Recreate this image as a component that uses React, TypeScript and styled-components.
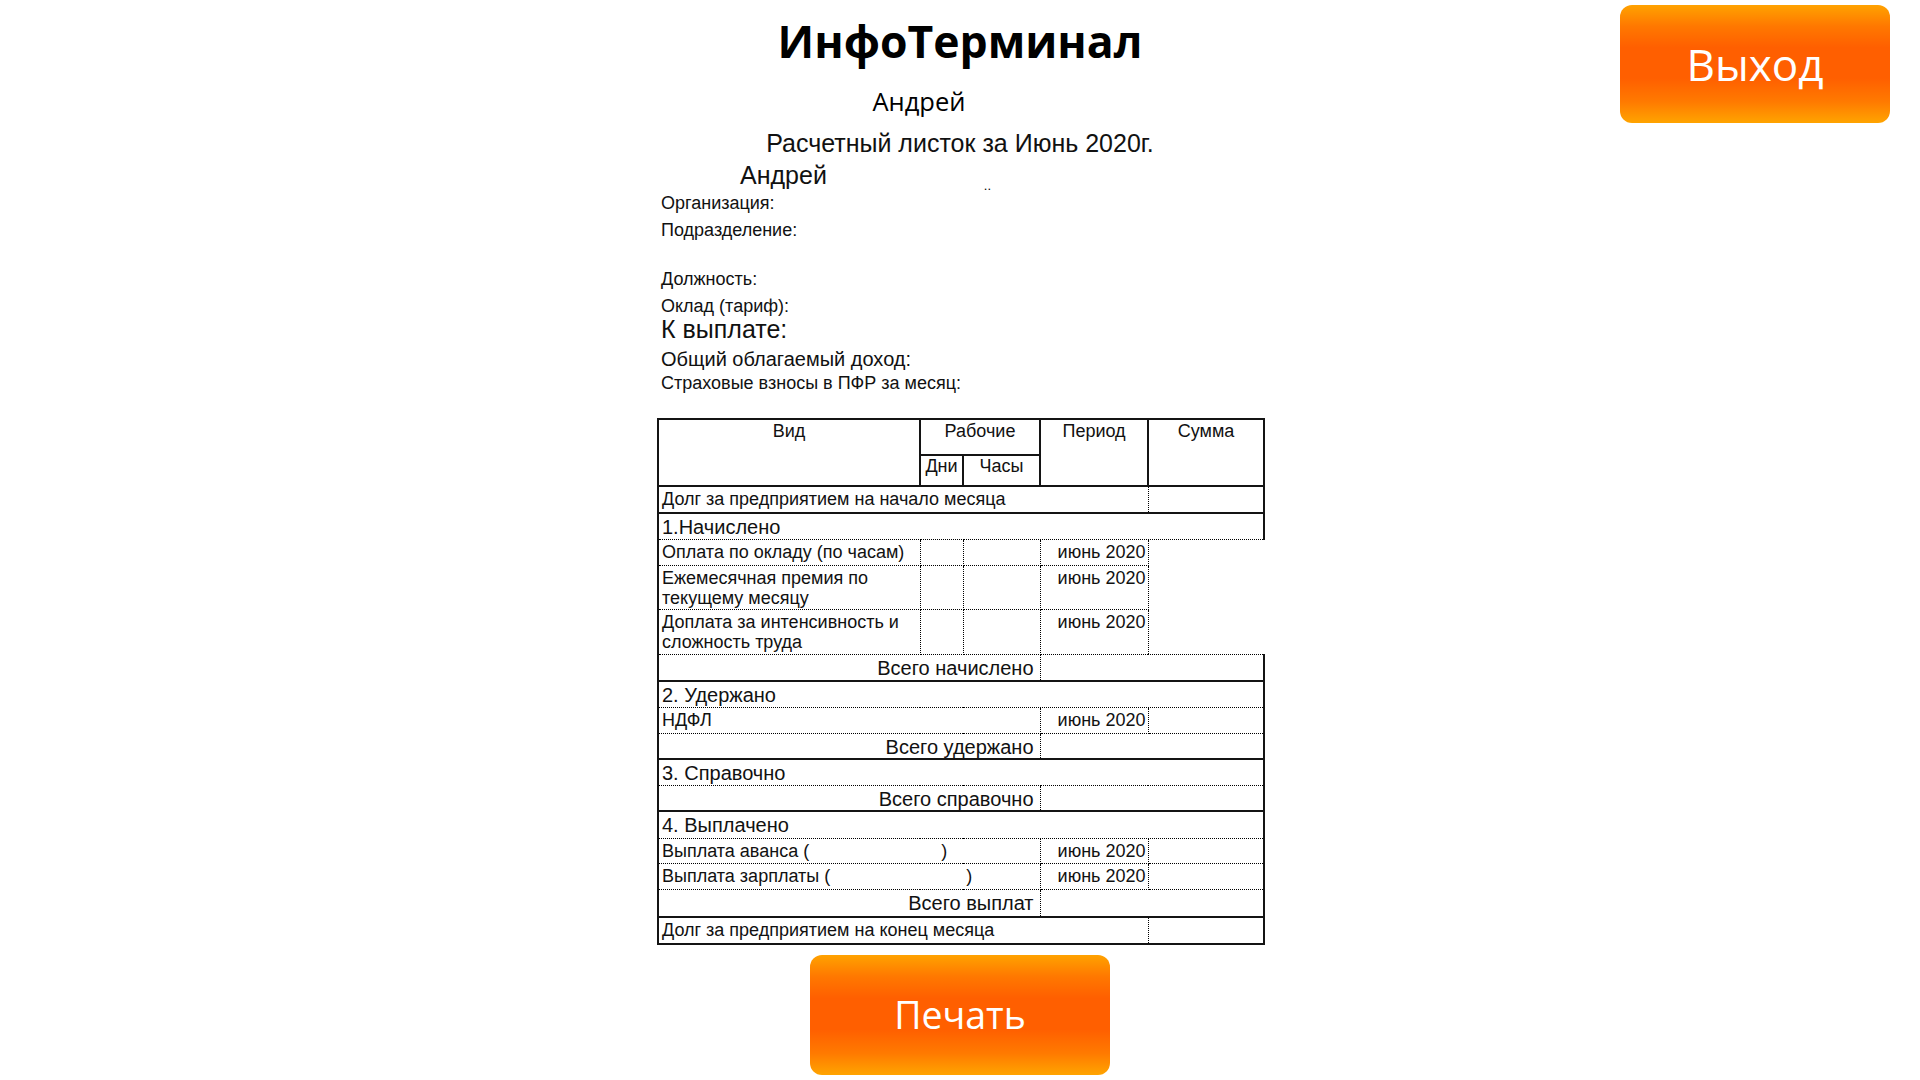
import React from "react";
import styled, { createGlobalStyle, css } from "styled-components";

const GlobalStyle = createGlobalStyle`
  html, body {
    margin: 0;
    padding: 0;
    background: #ffffff;
  }
  body {
    font-family: "Liberation Sans", Arial, sans-serif;
    color: #000;
  }
  #root {
    width: 1920px;
  }
`;

const Page = styled.div`
  width: 1920px;
  min-height: 1080px;
  display: flex;
  flex-direction: column;
  align-items: center;
`;

const Header = styled.header`
  width: 100%;
  display: grid;
  grid-template-columns: 1fr auto 1fr;
  align-items: start;
  padding-top: 5px;
  box-sizing: border-box;
`;

const TitleStack = styled.div`
  grid-column: 2;
  display: flex;
  flex-direction: column;
  align-items: center;
`;

const AppTitle = styled.h1`
  margin: 0;
  font-family: "Open Sans", "Noto Sans", sans-serif;
  font-weight: 700;
  font-size: 44.5px;
  line-height: 72px;
  color: #000;
`;

const UserName = styled.div`
  margin-top: 9px;
  padding-right: 82px;
  font-family: "Open Sans", "Noto Sans", sans-serif;
  font-size: 25.5px;
  line-height: 31px;
  color: #000;
`;

const OrangeButton = styled.button<{ $w: number; $h: number; $font: number }>`
  width: ${(p) => p.$w}px;
  height: ${(p) => p.$h}px;
  border: none;
  border-radius: 12px;
  padding: 0;
  cursor: pointer;
  background: linear-gradient(
    180deg,
    #ffa200 0%,
    #ff7800 18%,
    #ff5f00 36%,
    #ff5f00 62%,
    #ff7a00 82%,
    #ffa400 100%
  );
  color: #fff;
  font-family: "Open Sans", "Noto Sans", sans-serif;
  font-weight: 400;
  font-size: ${(p) => p.$font}px;
  line-height: 1;
`;

const ExitButton = styled(OrangeButton)`
  grid-column: 3;
  justify-self: end;
  margin-right: 30px;
`;

const PrintButton = styled(OrangeButton)`
  margin-top: 10px;
`;

const Sheet = styled.section`
  width: 606px;
  margin-top: 6px;
  display: flex;
  flex-direction: column;
  color: #111;
`;

const SheetTitle = styled.div`
  font-size: 25px;
  line-height: 28px;
  text-align: center;
`;

const EmployeeRow = styled.div`
  margin-top: 5px;
  padding-left: 83px;
  display: flex;
  align-items: flex-end;
  font-size: 25px;
  line-height: 26px;
`;

const Dots = styled.span`
  margin-left: 157px;
  margin-bottom: -5px;
  font-size: 13px;
  line-height: 14px;
  color: #000;
`;

const Field = styled.div<{ $size: number; $lh: number; $mt?: number }>`
  padding-left: 4px;
  font-size: ${(p) => p.$size}px;
  line-height: ${(p) => p.$lh}px;
  margin-top: ${(p) => p.$mt ?? 0}px;
`;

const Table = styled.table`
  margin-top: 24px;
  width: 606px;
  table-layout: fixed;
  border-collapse: collapse;
  font-family: "Liberation Sans", Arial, sans-serif;
  color: #111;
`;

const Col = styled.col<{ $w: number }>`
  width: ${(p) => p.$w}px;
`;

const Row = styled.tr<{ $h: number }>`
  height: ${(p) => p.$h}px;
`;

const solid = "2px solid #141414";
const dotted = "1px dotted #000";

const Head = styled.th<{ $sub?: boolean }>`
  border: ${solid};
  padding: ${(p) => (p.$sub ? "0" : "1px 0 0")};
  vertical-align: top;
  text-align: center;
  font-weight: 400;
  font-size: 18px;
  line-height: 20px;
  white-space: nowrap;
`;

type Edge = "solid" | "dotted" | "none";

const edge = (e: Edge) => (e === "solid" ? solid : e === "dotted" ? dotted : "none");

const Cell = styled.td<{
  $first?: boolean;
  $right: Edge;
  $bottom: Edge;
  $align?: "left" | "right";
  $big?: boolean;
}>`
  border-right: ${(p) => edge(p.$right)};
  border-bottom: ${(p) => edge(p.$bottom)};
  ${(p) =>
    p.$first &&
    css`
      border-left: ${solid};
    `}
  padding: 2px ${(p) => (p.$big && p.$align === "right" ? 6 : 2)}px 0 3px;
  vertical-align: top;
  text-align: ${(p) => p.$align ?? "left"};
  font-size: ${(p) => (p.$big ? 20 : 18)}px;
  line-height: ${(p) => (p.$big ? 22 : 20)}px;
`;

const Blank = styled.span<{ $w: number }>`
  display: inline-block;
  width: ${(p) => p.$w}px;
`;

const PERIOD = "июнь 2020";

export default function App() {
  return (
    <>
      <GlobalStyle />
      <Page>
        <Header>
          <TitleStack>
            <AppTitle>ИнфоТерминал</AppTitle>
            <UserName>Андрей</UserName>
          </TitleStack>
          <ExitButton $w={270} $h={118} $font={44}>
            Выход
          </ExitButton>
        </Header>

        <Sheet>
          <SheetTitle>Расчетный листок за Июнь 2020г.</SheetTitle>
          <EmployeeRow>
            Андрей
            <Dots>..</Dots>
          </EmployeeRow>
          <Field $size={18} $lh={26} $mt={2}>
            Организация:
          </Field>
          <Field $size={18} $lh={26} $mt={1}>
            Подразделение:
          </Field>
          <Field $size={18} $lh={24} $mt={24}>
            Должность:
          </Field>
          <Field $size={18} $lh={24} $mt={3}>
            Оклад (тариф):
          </Field>
          <Field $size={25} $lh={22} $mt={0}>
            К выплате:
          </Field>
          <Field $size={20} $lh={26} $mt={6}>
            Общий облагаемый доход:
          </Field>
          <Field $size={18} $lh={22} $mt={0}>
            Страховые взносы в ПФР за месяц:
          </Field>

          <Table>
            <colgroup>
              <Col $w={262} />
              <Col $w={43} />
              <Col $w={77} />
              <Col $w={108} />
              <Col $w={116} />
            </colgroup>
            <thead>
              <Row $h={36}>
                <Head rowSpan={2}>Вид</Head>
                <Head colSpan={2}>Рабочие</Head>
                <Head rowSpan={2}>Период</Head>
                <Head rowSpan={2}>Сумма</Head>
              </Row>
              <Row $h={31}>
                <Head $sub>Дни</Head>
                <Head $sub>Часы</Head>
              </Row>
            </thead>
            <tbody>
              <Row $h={27}>
                <Cell colSpan={4} $first $right="dotted" $bottom="solid">
                  Долг за предприятием на начало месяца
                </Cell>
                <Cell $right="solid" $bottom="solid" />
              </Row>

              <Row $h={26}>
                <Cell colSpan={5} $first $right="solid" $bottom="dotted" $big>
                  1.Начислено
                </Cell>
              </Row>
              <Row $h={26}>
                <Cell $first $right="dotted" $bottom="dotted">
                  Оплата по окладу (по часам)
                </Cell>
                <Cell $right="dotted" $bottom="dotted" />
                <Cell $right="dotted" $bottom="dotted" />
                <Cell $right="dotted" $bottom="dotted" $align="right">
                  {PERIOD}
                </Cell>
                <Cell rowSpan={3} $right="none" $bottom="dotted" />
              </Row>
              <Row $h={44}>
                <Cell $first $right="dotted" $bottom="dotted">
                  Ежемесячная премия по текущему месяцу
                </Cell>
                <Cell $right="dotted" $bottom="dotted" />
                <Cell $right="dotted" $bottom="dotted" />
                <Cell $right="dotted" $bottom="dotted" $align="right">
                  {PERIOD}
                </Cell>
              </Row>
              <Row $h={45}>
                <Cell $first $right="dotted" $bottom="dotted">
                  Доплата за интенсивность и сложность труда
                </Cell>
                <Cell $right="dotted" $bottom="dotted" />
                <Cell $right="dotted" $bottom="dotted" />
                <Cell $right="dotted" $bottom="dotted" $align="right">
                  {PERIOD}
                </Cell>
              </Row>
              <Row $h={27}>
                <Cell colSpan={3} $first $right="dotted" $bottom="solid" $align="right" $big>
                  Всего начислено
                </Cell>
                <Cell colSpan={2} $right="solid" $bottom="solid" />
              </Row>

              <Row $h={26}>
                <Cell colSpan={5} $first $right="solid" $bottom="dotted" $big>
                  2. Удержано
                </Cell>
              </Row>
              <Row $h={26}>
                <Cell colSpan={3} $first $right="dotted" $bottom="dotted">
                  НДФЛ
                </Cell>
                <Cell $right="dotted" $bottom="dotted" $align="right">
                  {PERIOD}
                </Cell>
                <Cell $right="solid" $bottom="dotted" />
              </Row>
              <Row $h={26}>
                <Cell colSpan={3} $first $right="dotted" $bottom="solid" $align="right" $big>
                  Всего удержано
                </Cell>
                <Cell colSpan={2} $right="solid" $bottom="solid" />
              </Row>

              <Row $h={26}>
                <Cell colSpan={5} $first $right="solid" $bottom="dotted" $big>
                  3. Справочно
                </Cell>
              </Row>
              <Row $h={26}>
                <Cell colSpan={3} $first $right="dotted" $bottom="solid" $align="right" $big>
                  Всего справочно
                </Cell>
                <Cell colSpan={2} $right="solid" $bottom="solid" />
              </Row>

              <Row $h={27}>
                <Cell colSpan={5} $first $right="solid" $bottom="dotted" $big>
                  4. Выплачено
                </Cell>
              </Row>
              <Row $h={25}>
                <Cell colSpan={3} $first $right="dotted" $bottom="dotted">
                  Выплата аванса (<Blank $w={132} />)
                </Cell>
                <Cell $right="dotted" $bottom="dotted" $align="right">
                  {PERIOD}
                </Cell>
                <Cell $right="solid" $bottom="dotted" />
              </Row>
              <Row $h={26}>
                <Cell colSpan={3} $first $right="dotted" $bottom="dotted">
                  Выплата зарплаты (<Blank $w={136} />)
                </Cell>
                <Cell $right="dotted" $bottom="dotted" $align="right">
                  {PERIOD}
                </Cell>
                <Cell $right="solid" $bottom="dotted" />
              </Row>
              <Row $h={28}>
                <Cell colSpan={3} $first $right="dotted" $bottom="solid" $align="right" $big>
                  Всего выплат
                </Cell>
                <Cell colSpan={2} $right="solid" $bottom="solid" />
              </Row>

              <Row $h={27}>
                <Cell colSpan={4} $first $right="dotted" $bottom="solid">
                  Долг за предприятием на конец месяца
                </Cell>
                <Cell $right="solid" $bottom="solid" />
              </Row>
            </tbody>
          </Table>
        </Sheet>

        <PrintButton $w={300} $h={120} $font={37.5}>
          Печать
        </PrintButton>
      </Page>
    </>
  );
}
